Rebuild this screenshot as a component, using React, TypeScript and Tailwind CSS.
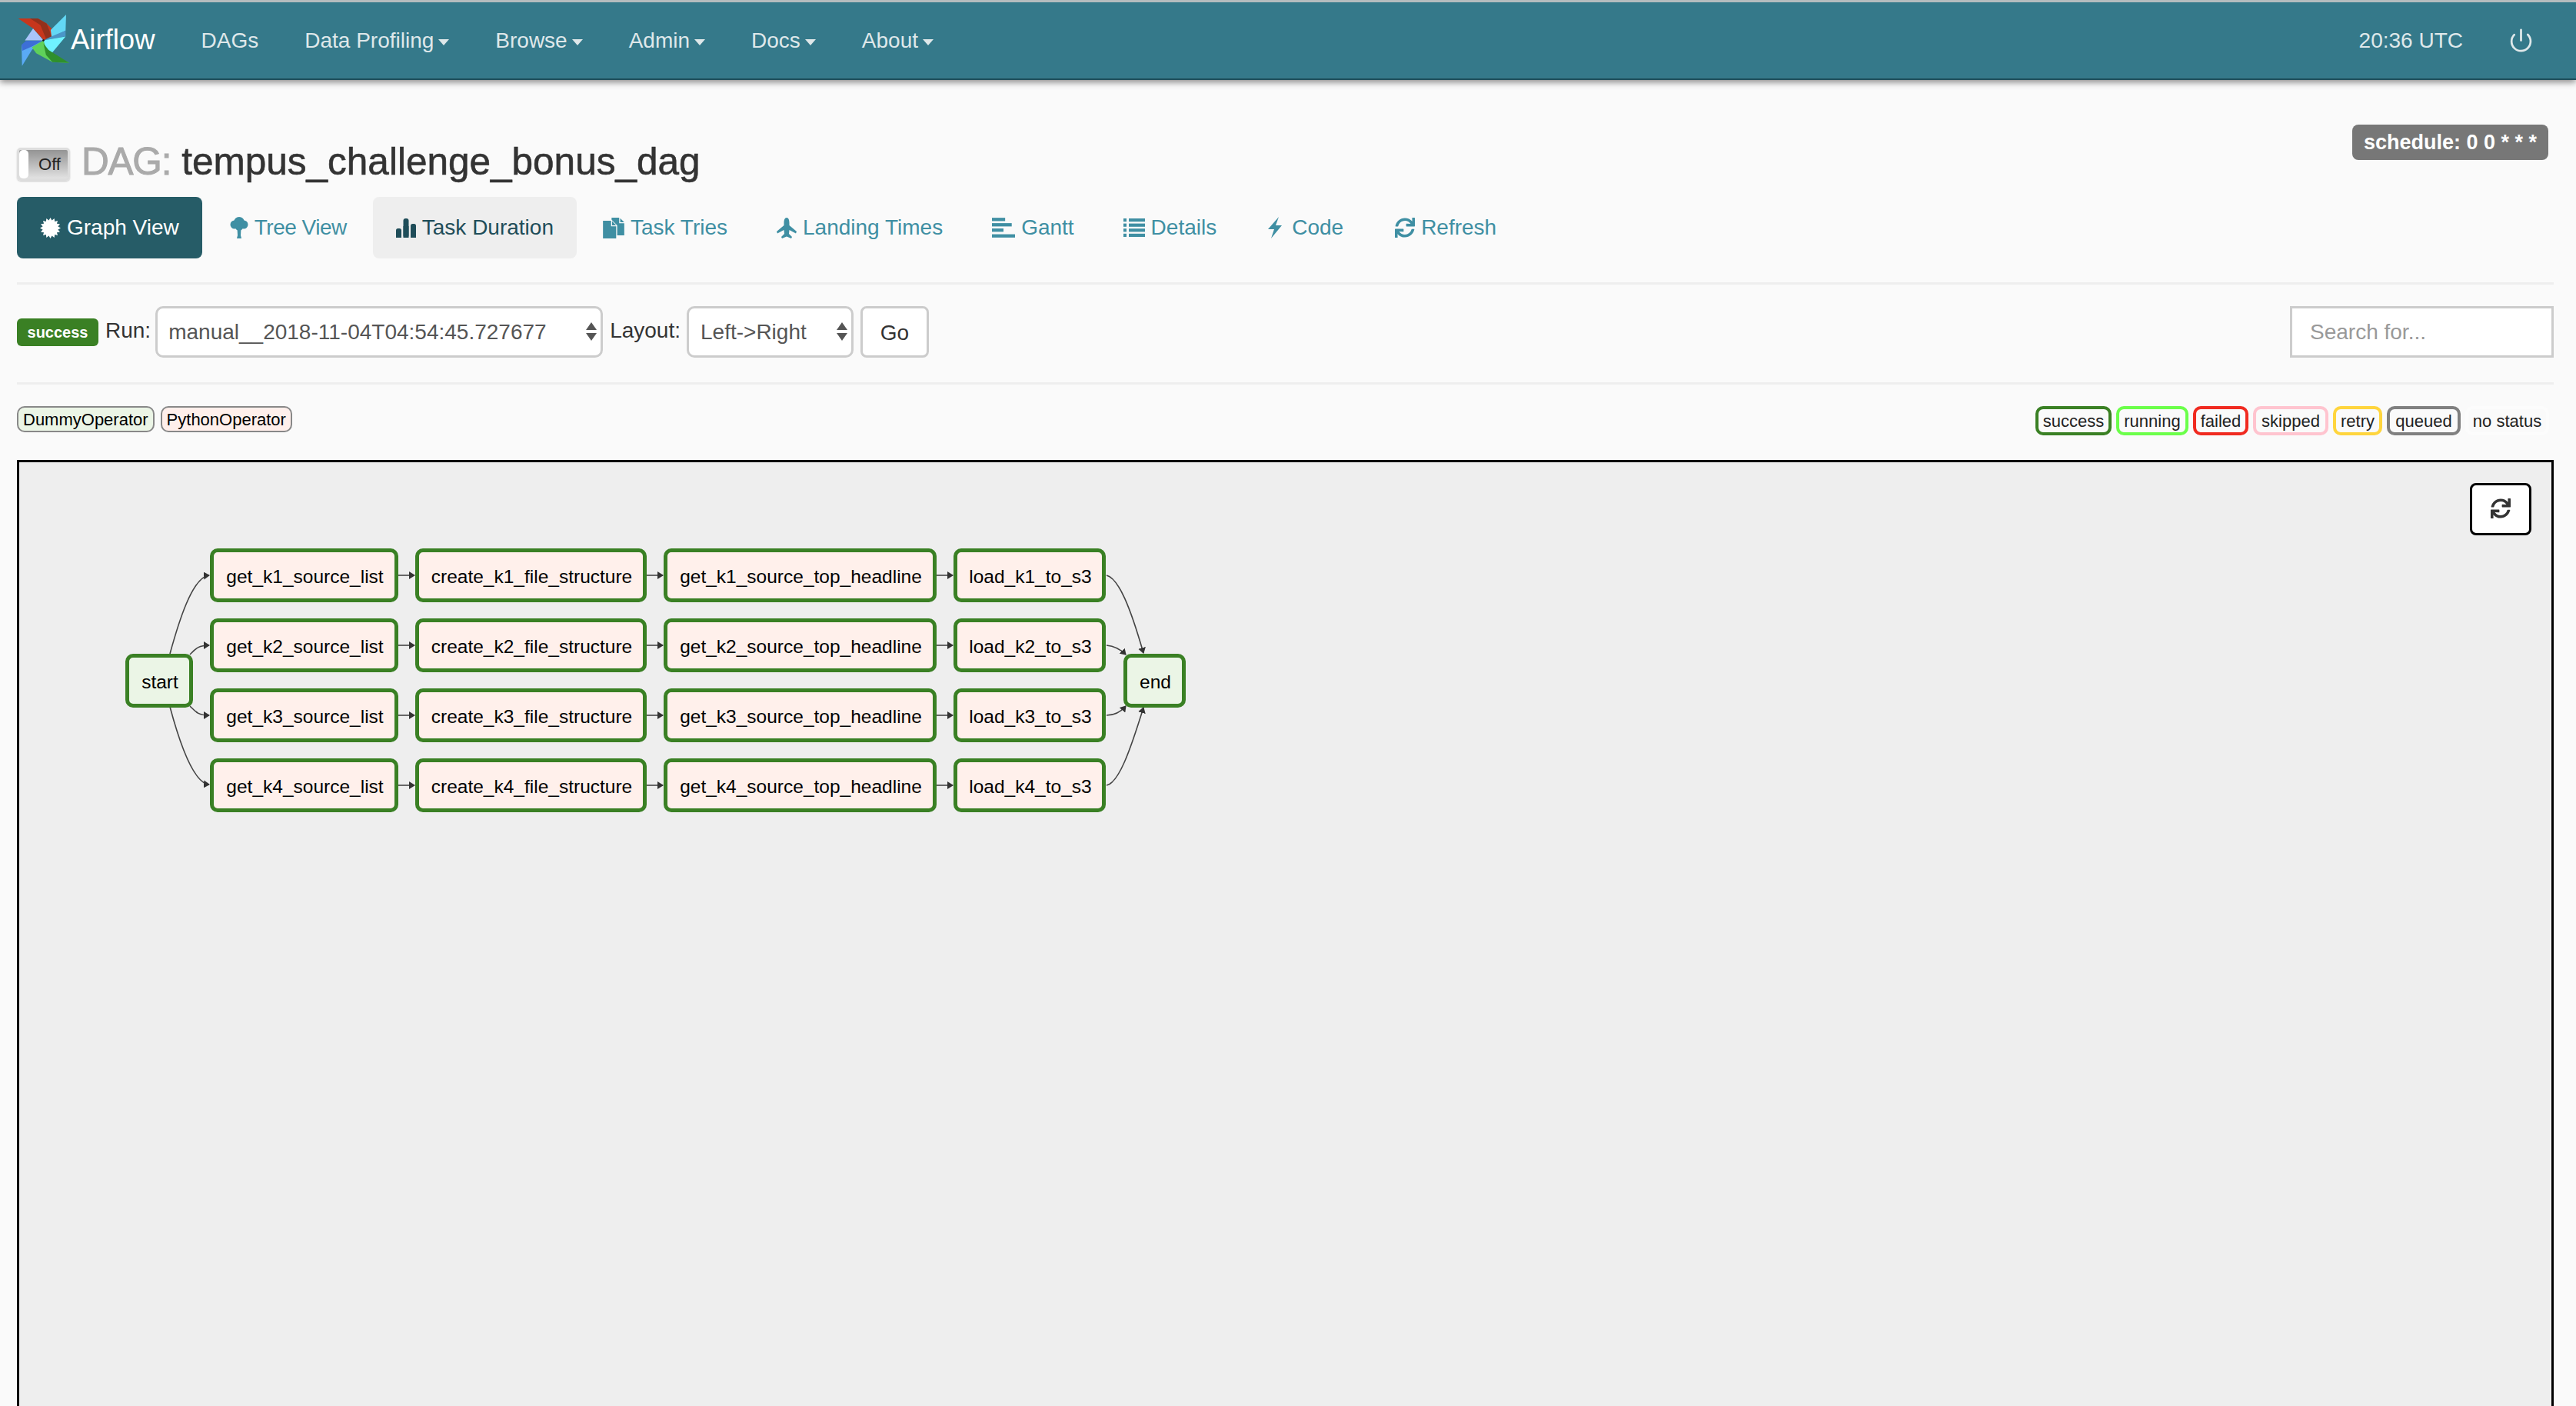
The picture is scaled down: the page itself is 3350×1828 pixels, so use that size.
import { FaSync } from 'react-icons/fa'
import { Power } from 'lucide-react'

// Canvas coordinates are page pixels minus the inner corner of the graph box
const OX = 25
const OY = 601

const rowTops = [713, 804, 895, 986]
const columns = [
    { left: 273, width: 245, name: (k: number) => `get_k${k}_source_list` },
    { left: 540, width: 301, name: (k: number) => `create_k${k}_file_structure` },
    { left: 863, width: 355, name: (k: number) => `get_k${k}_source_top_headline` },
    { left: 1240, width: 198, name: (k: number) => `load_k${k}_to_s3` },
]

const edges = [
    'M221 850 C232 810 250 750 272 748',
    'M247 851 C255 843 258 839 272 839',
    'M247 918 C255 926 258 930 272 930',
    'M221 919 C232 960 250 1018 272 1020',
    'M1439 748 C1455 752 1470 790 1487 849',
    'M1439 839 C1450 840 1458 845 1464 851',
    'M1439 930 C1450 930 1458 925 1464 918',
    'M1439 1021 C1455 1018 1470 975 1487 920',
    ...[748, 839, 930, 1021].flatMap((y) => [
        `M518 ${y} L539 ${y}`,
        `M841 ${y} L862 ${y}`,
        `M1218 ${y} L1239 ${y}`,
    ]),
]

const burst = Array.from({ length: 32 }, (_, i) => {
    const r = i % 2 === 0 ? 12 : 9
    const a = (i * Math.PI) / 16
    return `${12 + r * Math.sin(a)},${12 - r * Math.cos(a)}`
}).join(' ')

function GraphNode({ left, top, width, height = 70, text, dummy = false }: { left: number, top: number, width: number, height?: number, text: string, dummy?: boolean }) {
    return (
        <div
            className={`absolute flex items-center justify-center pt-[5px] pl-[2px] border-[5px] border-[#3a8024] rounded-[10px] text-[24.5px] text-black whitespace-nowrap ${dummy ? 'bg-[#ebf5e6]' : 'bg-[#fff0eb]'}`}
            style={{ left: left - OX, top: top - OY, width, height }}
        >
            {text}
        </div>
    )
}

function Caret() {
    return <span className="ml-[6px] mt-[4px] w-0 h-0 border-x-[7px] border-x-transparent border-t-[8px] border-t-current" />
}

function NavItem({ label, menu = true }: { label: string, menu?: boolean }) {
    return (
        <span className="flex items-center px-[30px] h-full">
            {label}
            {menu && <Caret />}
        </span>
    )
}

function Logo() {
    return (
        <svg viewBox="40 28 200 200" className="w-[67px] h-[67px] shrink-0">
            <polygon points="57,227 55,145 135,128 95,165" fill="#5aaaf5" />
            <polygon points="55,145 72,130 138,128 100,150 58,168" fill="#3d6fd6" />
            <polygon points="68,128 100,82 140,128" fill="#a9c4fa" />
            <polygon points="42,43 118,43 152,62 188,98 142,128 100,82" fill="#c7361c" />
            <polygon points="88,43 118,43 152,62 172,112 150,122 128,68" fill="#93301b" />
            <polygon points="228,28 226,90 172,116 168,88" fill="#63d8f5" />
            <polygon points="226,90 226,112 142,128 172,112" fill="#4a96c8" />
            <polygon points="140,128 226,113 172,178 148,160" fill="#6ff2ff" />
            <polygon points="140,128 95,155 112,178 175,212 240,215 172,178 150,160" fill="#5fd15a" />
            <polygon points="140,140 160,165 240,215 175,212 150,185" fill="#2f8f2c" />
            <circle cx="140" cy="128" r="4" fill="#111" />
        </svg>
    )
}

function Tab({ icon, label, active = false, muted = false, tight = false }: { icon: React.ReactNode, label: string, active?: boolean, muted?: boolean, tight?: boolean }) {
    return (
        <span className={`flex items-center gap-[8px] h-[80px] px-[30px] rounded-[8px] ${tight ? 'tracking-[-0.5px]' : ''} ${active ? 'bg-[#265c67] text-white' : muted ? 'bg-[#eeeeee] text-[#1f4d59]' : 'text-[#3f8fa3]'}`}>
            {icon}
            {label}
        </span>
    )
}

function Arrows() {
    return (
        <svg viewBox="0 0 14 24" className="absolute right-[8px] top-[21px] w-[14px] h-[24px] fill-[#555]">
            <polygon points="7,0 14,10 0,10" />
            <polygon points="0,14 14,14 7,24" />
        </svg>
    )
}

function StateBadge({ label, border }: { label: string, border: string }) {
    return (
        <span className={`flex items-center justify-center h-[38px] border-[4px] rounded-[10px] bg-[#fafafa] text-[22px] text-[#222] ${border}`}>
            {label}
        </span>
    )
}

export default function App() {
    return (
        <div className="font-['Liberation_Sans',Arial,sans-serif] text-[28px] text-[#333] h-[1828px] overflow-hidden bg-[#fafafa] flex flex-col">
            <nav className="h-[104px] shrink-0 flex items-center border-t-[3px] border-t-[#b5bcbe] border-b-[2px] border-b-[#1e4e5a] bg-[#35798a] text-[#dfe8ea] shadow-[0_3px_8px_rgba(0,0,0,0.45)] pl-[23px] pr-[55px]">
                <Logo />
                <span className="mr-[30px] ml-[2px] text-[36.5px] text-white">Airflow</span>
                <NavItem label="DAGs" menu={false} />
                <NavItem label="Data Profiling" />
                <NavItem label="Browse" />
                <NavItem label="Admin" />
                <NavItem label="Docs" />
                <NavItem label="About" />
                <span className="ml-auto mr-[59px]">20:36 UTC</span>
                <Power className="w-[33px] h-[33px]" strokeWidth={2} />
            </nav>

            <main className="flex-1 min-h-0 flex flex-col pl-[22px] pr-[29px]">
                <div className="h-[152px] shrink-0 flex justify-between">
                    <div className="flex items-start pt-[73px]">
                        <span className="relative mt-[15px] w-[69px] h-[43px] flex items-center justify-end pr-[9px] border-[3px] border-[#ddd] rounded-[5px] bg-gradient-to-b from-[#949494] to-[#e2e2e2] text-[22px] text-[#222] shadow-[0_1px_2px_rgba(0,0,0,0.2)]">
                            <span className="absolute left-0 top-0 bottom-0 w-[12px] rounded-[5px] bg-white" />
                            Off
                        </span>
                        <h1 className="ml-[15px] text-[49.5px] leading-[66px]">
                            <span className="text-[#aaaaaa] mr-[14px] tracking-[-1.2px] [-webkit-text-stroke:1px_#aaaaaa]">DAG:</span>
                            <span className="[-webkit-text-stroke:0.6px_#333]">tempus_challenge_bonus_dag</span>
                        </h1>
                    </div>
                    <span className="mt-[58px] mr-[7px] h-[46px] px-[15px] flex items-center rounded-[8px] bg-[#777777] text-[27px] font-bold text-white">
                        schedule: 0 0 * * *
                    </span>
                </div>

                <div className="shrink-0 flex gap-[4px]">
                    <Tab active label="Graph View" icon={<svg viewBox="0 0 24 24" className="w-[27px] h-[27px] shrink-0 fill-current"><polygon points={burst} /></svg>} />
                    <Tab tight label="Tree View" icon={
                        <svg viewBox="0 0 24 28" className="w-[24px] h-[28px] ml-[2px] shrink-0 fill-current">
                            <circle cx="12" cy="7" r="7" />
                            <circle cx="6" cy="10" r="5.5" />
                            <circle cx="18" cy="10" r="5.5" />
                            <circle cx="12" cy="13" r="5" />
                            <polygon points="9.5,15 14.5,15 14,24 15,28 9,28 10,24" />
                        </svg>
                    } />
                    <Tab muted label="Task Duration" icon={
                        <svg viewBox="0 0 26 25" className="w-[26px] h-[25px] shrink-0 fill-current">
                            <rect x="0" y="13" width="7" height="12" rx="2.5" />
                            <rect x="0" y="18" width="7" height="7" />
                            <rect x="9.5" y="0" width="7" height="25" rx="3" />
                            <rect x="9.5" y="10" width="7" height="15" />
                            <rect x="19" y="7" width="7" height="18" rx="2.5" />
                            <rect x="19" y="14" width="7" height="11" />
                        </svg>
                    } />
                    <Tab label="Task Tries" icon={
                        <svg viewBox="0 0 84 82" className="w-[28px] h-[27px] shrink-0 fill-current">
                            <polygon points="0,12 32,12 32,34 52,34 52,82 0,82" />
                            <polygon points="36,14 52,30 36,30" />
                            <polygon points="34,0 64,0 64,22 84,22 84,70 56,70 56,30 34,8" />
                            <polygon points="68,2 84,18 68,18" />
                        </svg>
                    } />
                    <Tab label="Landing Times" icon={
                        <svg viewBox="0 0 26 27" className="w-[26px] h-[27px] shrink-0 fill-current">
                            <path d="M13 0 C15.5 0 16.5 3 16.5 7 L16.5 10 L26 18 L25 20.5 L16.5 16 L16 21 L20 25 L19 27 L13 24.5 L7 27 L6 25 L10 21 L9.5 16 L1 20.5 L0 18 L9.5 10 L9.5 7 C9.5 3 10.5 0 13 0 Z" />
                        </svg>
                    } />
                    <Tab label="Gantt" icon={
                        <svg viewBox="0 0 28 24" className="w-[30px] h-[26px] shrink-0 fill-current">
                            <rect x="0" y="0" width="16" height="4" />
                            <rect x="0" y="6.5" width="24" height="4" />
                            <rect x="0" y="13" width="14" height="4" />
                            <rect x="0" y="20" width="28" height="4" />
                        </svg>
                    } />
                    <Tab label="Details" icon={
                        <svg viewBox="0 0 28 24" className="w-[28px] h-[26px] shrink-0 fill-current">
                            {[0, 6.6, 13.2, 19.8].map((y) => (
                                <g key={y}>
                                    <rect x="0" y={y} width="4" height="4.2" />
                                    <rect x="7" y={y} width="21" height="4.2" />
                                </g>
                            ))}
                        </svg>
                    } />
                    <Tab label="Code" icon={
                        <svg viewBox="0 0 18 28" className="w-[18px] h-[28px] ml-[3px] mr-[5px] shrink-0 fill-current">
                            <polygon points="14,0 10,11 18,11 4,28 8,16 0,16" />
                        </svg>
                    } />
                    <Tab label="Refresh" icon={<FaSync className="w-[26px] h-[26px] ml-[3px] shrink-0" />} />
                </div>

                <div className="shrink-0 mt-[31px] border-t-[3px] border-[#eeeeee] h-[130px] pt-[28px] flex items-start justify-between">
                    <div className="flex items-center">
                        <span className="w-[106px] h-[36px] flex items-center justify-center rounded-[6px] bg-[#3a8024] text-[20px] font-bold text-white">success</span>
                        <span className="ml-[9px] mb-[4px]">Run:</span>
                        <div className="relative ml-[6px]">
                            <select className="block appearance-none w-[582px] h-[67px] pl-[14px] border-[3px] border-[#cccccc] rounded-[10px] bg-white text-[#555555]">
                                <option>manual__2018-11-04T04:54:45.727677</option>
                            </select>
                            <Arrows />
                        </div>
                        <span className="ml-[9px] mb-[4px]">Layout:</span>
                        <div className="relative ml-[8px]">
                            <select className="block appearance-none w-[217px] h-[67px] pl-[15px] border-[3px] border-[#cccccc] rounded-[10px] bg-white text-[#555555]">
                                <option>Left-&gt;Right</option>
                            </select>
                            <Arrows />
                        </div>
                        <button className="ml-[9px] w-[89px] h-[67px] pt-[2px] border-[3px] border-[#cccccc] rounded-[8px] bg-white">Go</button>
                    </div>
                    <input placeholder="Search for..." className="w-[343px] h-[67px] pl-[23px] border-[3px] border-[#cccccc] bg-white placeholder:text-[#999999]" />
                </div>

                <div className="shrink-0 border-t-[3px] border-[#eeeeee] pt-[28px] h-[101px] flex items-start justify-between">
                    <div className="flex gap-[8px] text-[22px] text-black">
                        <span className="flex items-center h-[34px] px-[6px] border-[2px] border-[#888888] rounded-[10px] bg-[#ebf5e6]">DummyOperator</span>
                        <span className="flex items-center h-[34px] px-[6px] border-[2px] border-[#888888] rounded-[10px] bg-[#ffefeb]">PythonOperator</span>
                    </div>
                    <div className="grid grid-cols-[99px_94px_72px_98px_64px_96px_109px] gap-[6px] mr-[6px]">
                        <StateBadge label="success" border="border-[#3a8024]" />
                        <StateBadge label="running" border="border-[#6bff4a]" />
                        <StateBadge label="failed" border="border-[#f02a20]" />
                        <StateBadge label="skipped" border="border-[#ffc4cf]" />
                        <StateBadge label="retry" border="border-[#ffd53d]" />
                        <StateBadge label="queued" border="border-[#808080]" />
                        <StateBadge label="no status" border="border-[#fcfcfc]" />
                    </div>
                </div>

                <div className="relative flex-1 min-h-0 border-[3px] border-b-0 border-black bg-[#eeeeee]">
                    <svg className="absolute left-0 top-0 w-[1600px] h-[600px]" viewBox={`${OX} ${OY} 1600 600`} fill="none">
                        <defs>
                            <marker id="arrow" markerUnits="userSpaceOnUse" markerWidth="8" markerHeight="10" refX="7" refY="5" orient="auto">
                                <polygon points="0,0 8,5 0,10" fill="#333" />
                            </marker>
                        </defs>
                        {edges.map((d) => (
                            <path key={d} d={d} stroke="#444" strokeWidth="1.6" markerEnd="url(#arrow)" />
                        ))}
                    </svg>

                    <GraphNode left={163} top={850} width={88} text="start" dummy />
                    {rowTops.map((top, i) => columns.map((col) => (
                        <GraphNode key={col.name(i + 1)} left={col.left} top={top} width={col.width} text={col.name(i + 1)} />
                    )))}
                    <GraphNode left={1461} top={850} width={81} text="end" dummy />

                    <button className="absolute right-[26px] top-[27px] w-[80px] h-[68px] pb-[2px] flex items-center justify-center border-[3px] border-black rounded-[8px] bg-white">
                        <FaSync className="w-[26px] h-[26px] text-[#333]" />
                    </button>
                </div>
            </main>
        </div>
    )
}
